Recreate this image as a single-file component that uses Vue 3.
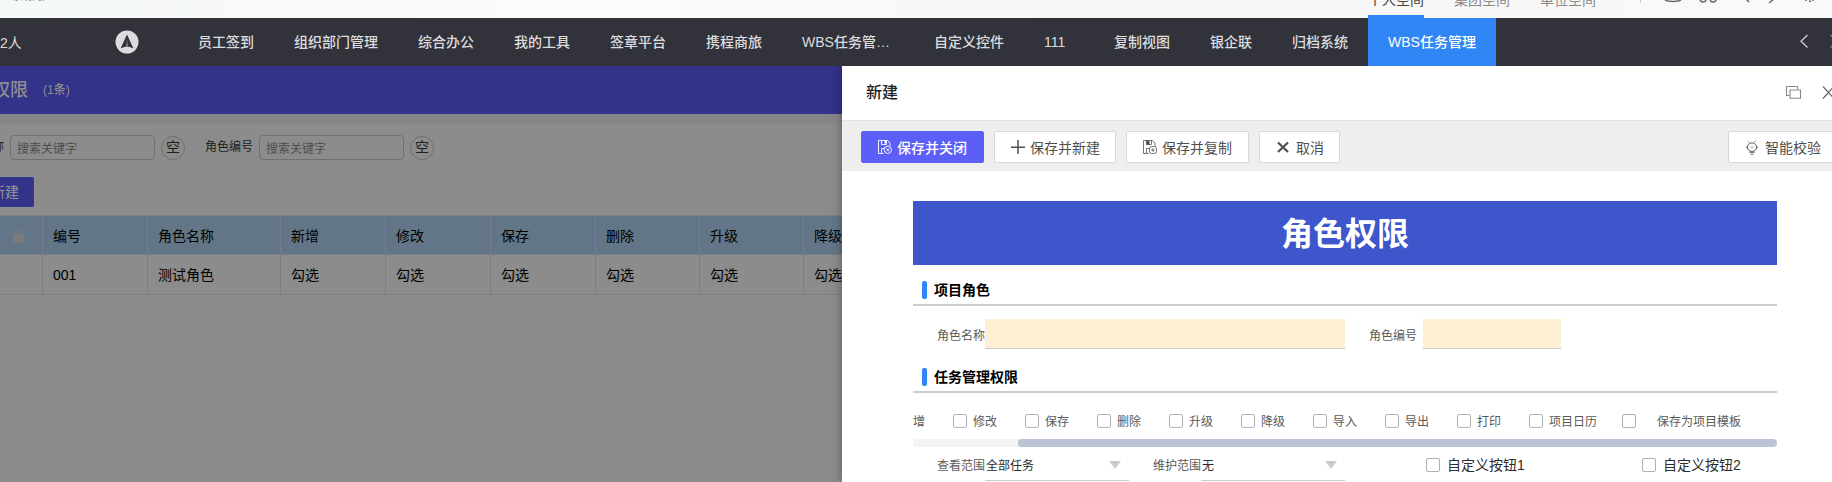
<script setup>
const nav = [
  { t: '员工签到', w: 56 }, { t: '组织部门管理', w: 84 }, { t: '综合办公', w: 56 },
  { t: '我的工具', w: 56 }, { t: '签章平台', w: 56 }, { t: '携程商旅', w: 56 },
  { t: 'WBS任务管…', w: 92 }, { t: '自定义控件', w: 70 }, { t: '111', w: 30 },
  { t: '复制视图', w: 56 }, { t: '银企联', w: 42 }, { t: '归档系统', w: 56 },
  { t: 'WBS任务管理', w: 88, on: true }
]
const cols = [
  ['编号', '001', 105], ['角色名称', '测试角色', 133], ['新增', '勾选', 105], ['修改', '勾选', 105],
  ['保存', '勾选', 105], ['删除', '勾选', 104], ['升级', '勾选', 104], ['降级', '勾选', 105]
]
const perms = ['修改', '保存', '删除', '升级', '降级', '导入', '导出', '打印', '项目日历']
</script>

<template>
  <div class="page">
    <header class="top">
      <span class="crumb">系统门户</span>
      <div class="spaces"><span class="cur">个人空间</span><span>集团空间</span><span>单位空间</span></div>
      <svg class="tools" width="192" height="18" viewBox="0 0 192 18" fill="none" stroke="#666" stroke-width="1.5">
        <path d="M.5 0V3" stroke="#ccc" stroke-width="1" />
        <path d="M25 0C28 2 38 2 41 0" />
        <path d="M60 -1a3 3 0 0 0 6 0M70 -1a3 3 0 0 0 6 0" />
        <path d="M105 -2l4 4M129 3l5 -4M165 0h2M169 1.200h2M172 0h2" />
      </svg>
    </header>
    <nav class="nav">
      <span class="people">2人</span>
      <svg class="logo" width="24" height="24" viewBox="0 0 24 24">
        <circle cx="12" cy="12" r="11.5" fill="#dcdcde" />
        <path d="M12 4.500L18.300 18.300L12 16.300L5.700 18.300Z" fill="#32323a" />
        <path d="M12 9.500L13.300 16.700H10.700Z" fill="#77777d" />
      </svg>
      <div class="menu">
        <div v-for="n in nav" :key="n.t" class="item" :class="{ on: n.on }">
          <span :style="{ width: n.w + 'px' }">{{ n.t }}</span>
        </div>
      </div>
      <svg class="arrows" width="34" height="16" viewBox="0 0 34 16" fill="none" stroke="#d0d0d3" stroke-width="1.3">
        <path d="M9.500 2L3 8.300L9.500 14.500" /><path d="M32.500 2L39 8.300L32.500 14.500" stroke="#888" />
      </svg>
    </nav>

    <main class="list">
      <div class="banner"><span class="name">权限</span><span class="count">(1条)</span></div>
      <div class="strip"></div>
      <div class="search">
        <span class="lab first">称</span><div class="inp">搜索关键字</div><span class="nul">空</span>
        <span class="lab">角色编号</span><div class="inp">搜索关键字</div><span class="nul">空</span>
      </div>
      <div class="act"><div class="new">新建</div></div>
      <div class="table">
        <div class="tr th">
          <div class="lock">
            <svg width="12" height="14" viewBox="0 0 12 14"><path d="M3 6V4a3 3 0 0 1 6 0V6" fill="none" stroke="#7b7a7c" stroke-width="1.4" /><rect x=".5" y="5.500" width="11" height="8" rx="1" fill="#7b7a7c" /></svg>
          </div>
          <div v-for="c in cols" :key="c[0]" class="td" :style="{ width: c[2] + 'px' }">{{ c[0] }}</div>
        </div>
        <div class="tr">
          <div class="lock"></div>
          <div v-for="c in cols" :key="c[0]" class="td" :style="{ width: c[2] + 'px' }">{{ c[1] }}</div>
        </div>
      </div>
    </main>

    <section class="drawer">
      <div class="head">
        <span>新建</span>
        <svg width="47" height="16" viewBox="0 0 47 16" fill="none" stroke="#888" stroke-width="1.100">
          <path d="M4.500 10.500H1.500V1.500H12.500V4.500" /><path d="M5 5H15.500V13.200H5Z" />
          <path d="M38 1.500L49 13.500M49 1.500L38 13.500" stroke="#666" stroke-width="1.200" />
        </svg>
      </div>
      <div class="bar">
        <div class="btn b1">
          <svg width="14" height="14" viewBox="0 0 14 14" fill="none" stroke="currentColor" stroke-width=".9">
            <path d="M5.500 13.500H.5V.5H9.500L12 3V6" /><path d="M3.500 .5V4.500H8.500V.5M3.500 13V8.500H6" /><path d="M6.500 1h1.500v2.500h-1.500z" fill="currentColor" stroke="none" />
            <circle cx="9.800" cy="9.800" r="3.700" /><path d="M8.300 8.300l3 3M11.300 8.300l-3 3" />
          </svg><span>保存并关闭</span>
        </div>
        <div class="btn b2">
          <svg width="14" height="14" viewBox="0 0 14 14" fill="none" stroke="currentColor" stroke-width="1.500"><path d="M0 7.200H14M7 0V14" /></svg><span>保存并新建</span>
        </div>
        <div class="btn b3">
          <svg width="14" height="14" viewBox="0 0 14 14" fill="none" stroke="currentColor" stroke-width=".8">
            <path d="M5.500 13.500H.5V.5H9.500L12 3V6" /><path d="M3.500 .5V4.500H8.500V.5M3.500 13V8.500H6" /><path d="M3.500 1h3v3.500h-3z" fill="currentColor" stroke="none" />
            <rect x="6.500" y="6.500" width="7" height="7" rx="2" /><path d="M10 8.200v3.600M8.200 10h3.600" />
          </svg><span>保存并复制</span>
        </div>
        <div class="btn b4">
          <svg width="12" height="12" viewBox="0 0 12 12" fill="none" stroke="currentColor" stroke-width="2.300"><path d="M1 1.500L11 11M11 1.500L1 11" /></svg><span>取消</span>
        </div>
        <div class="btn b5">
          <svg width="12" height="15" viewBox="0 0 12 15" fill="none" stroke="currentColor" stroke-width=".9">
            <ellipse cx="6" cy="7.200" rx="4.700" ry="4.300" /><path d="M0 7.200h1.500M10.500 7.200H12M3 2.500L2.500 1.500M8.500 2L9.500 .8M3.500 12.300h5M4.500 14.200h3" /><path d="M4 7.200h4" stroke-width=".4" />
          </svg><span>智能校验</span>
        </div>
      </div>
      <div class="form">
        <h1>角色权限</h1>
        <div class="sec"><i></i>项目角色</div>
        <div class="fields">
          <label>角色名称</label><div class="f f1"></div><label class="l2">角色编号</label><div class="f f2"></div>
        </div>
        <div class="sec s2"><i></i>任务管理权限</div>
        <div class="checks">
          <span class="clip">增</span>
          <span v-for="p in perms" :key="p" class="ck"><b></b>{{ p }}</span>
          <span class="ck tpl"><b></b>保存为项目模板</span>
        </div>
        <div class="scroll"><div class="thumb"></div></div>
        <div class="range">
          <label>查看范围</label><div class="sel"><span>全部任务</span><i></i></div>
          <label class="r2">维护范围</label><div class="sel"><span>无</span><i></i></div>
          <span class="big c1"><b></b>自定义按钮1</span>
          <span class="big c2"><b></b>自定义按钮2</span>
        </div>
      </div>
    </section>
  </div>
</template>

<style>
body { margin: 0; overflow: hidden; }
</style>
<style scoped>
* { box-sizing: border-box; }
.page { position: relative; width: 1832px; height: 482px; overflow: hidden; background: #8c8c8c; white-space: nowrap; font: 14px/20px "Liberation Sans", "Noto Sans CJK SC", sans-serif; color: #000; }
svg { flex: none; display: block; }
.top { height: 18px; background: linear-gradient(90deg, #f5f8f8, #fbfbfb 34%, #f6f6f6 60%, #f9f9f9); display: flex; overflow: hidden; color: #888; }
.crumb { width: 1368px; padding-left: 12px; font-size: 10px; line-height: 10px; margin-top: -8px; flex: none; }
.spaces { display: flex; width: 272px; gap: 30px; flex: none; }
.spaces span { width: 56px; height: 18px; line-height: 0; }
.spaces .cur { color: #444; border-bottom: 3px solid #3086f4; }
.nav { height: 48px; background: #32323a; display: flex; align-items: center; color: #dcdcde; font-weight: 500; }
.people { width: 115px; font-weight: 400; padding-top: 2px; }
.menu { display: flex; margin-left: 39px; flex: 1; align-self: stretch; }
.item { padding: 0 20px; display: flex; align-items: center; }
.item span { display: block; }
.item.on { background: #3086f4; color: #fff; }
.arrows { margin: 0 0 2px; }
.list { width: 842px; height: 416px; overflow: hidden; background: #8c8c8c; }
.banner { height: 48px; background: #323389; color: #8e8e8e; display: flex; align-items: center; font-weight: 500; }
.name { font-size: 18px; margin-left: -8px; width: 51px; padding-bottom: 1px; }
.count { font-size: 12px; }
.strip { height: 10px; background: #868686; }
.search { height: 53px; padding-top: 11px; display: flex; align-items: flex-start; font-size: 12px; color: #1c1c1c; }
.lab { width: 54px; margin-left: 20px; padding-top: 2px; }
.lab.first { width: 18px; margin-left: -8px; }
.inp { width: 145px; height: 25px; border: 1px solid #707070; border-radius: 4px; padding: 3px 6px 1px; color: #4c4c4c; }
.nul { width: 24px; height: 24px; margin: 1px 0 0 6px; border: 1px solid #707070; border-radius: 50%; line-height: 20px; text-indent: 4px; font-size: 14px; }
.act { height: 38px; }
.new { width: 34px; height: 30px; background: #323389; border: 1px solid #2a3f90; border-left: 0; border-radius: 0 2px 2px 0; color: #999; text-indent: -9px; line-height: 29px; overflow: hidden; }
.table { border-top: 1px solid #7d7e81; }
.tr { display: flex; height: 40px; border-bottom: 1px solid #7d7e81; line-height: 40px; width: 900px; }
.th { height: 39px; background: #637687; }
.tr:last-child { line-height: 41px; }
.lock { width: 42px; padding: 13px 0 0 13px; flex: none; }
.td { border-left: 1px solid #7d7e84; padding-left: 10px; flex: none; }
.drawer { position: absolute; left: 842px; top: 66px; width: 990px; height: 416px; background: #fff; box-shadow: 0 0 10px rgba(0, 0, 0, .35); clip-path: inset(0 0 0 -20px); }
.head { height: 54px; padding: 0 0 0 24px; display: flex; align-items: center; justify-content: space-between; font-size: 16px; font-weight: 500; color: #222; }
.bar { height: 51px; background: #eee; border-top: 1px solid #e2e2e2; padding: 10px 0 0 19px; display: flex; gap: 10px; }
.btn { height: 32px; flex: none; background: #fff; border: 1px solid #d8d8d8; border-radius: 2px; color: #4f4f4f; display: flex; align-items: center; padding-left: 16px; }
.btn svg { margin-right: 5px; }
.btn span { padding-top: 1px; }
.b1 { width: 123px; background: #5c5ef8; border-color: #5c5ef8; color: #fff; font-weight: 500; }
.b2 { width: 122px; }
.b3 { width: 123px; }
.b4 { width: 81px; padding-left: 17px; }
.b4 svg { margin-right: 7px; }
.b5 { width: 120px; margin-left: 378px; padding-left: 17px; }
.b5 svg { margin-right: 7px; }
.form { margin: 30px 0 0 71px; width: 864px; }
h1 { margin: 0; height: 64px; background: #3d56cb; color: #fff; text-align: center; font-size: 32px; line-height: 66px; font-weight: 700; }
.sec { height: 41px; border-bottom: 2px solid #ccc; padding: 11px 0 0 9px; display: flex; align-items: center; font-weight: 700; }
.sec i { width: 5px; height: 18px; border-radius: 2px; background: #3086f4; margin-right: 7px; }
.fields { display: flex; height: 43px; padding: 13px 0 0 24px; font-size: 12px; color: #5a5a5a; }
label { width: 48px; padding-top: 7px; flex: none; }
.l2 { margin-left: 24px; width: 54px; }
.f { height: 30px; background: #fef0d3; border-bottom: 1px solid #ccc; }
.f1 { width: 360px; }
.f2 { width: 138px; }
.s2 { height: 44px; padding-top: 14px; padding-bottom: 1px; }
.checks { height: 46px; padding-top: 19px; display: flex; font-size: 12px; color: #5a5a5a; }
.clip { width: 40px; }
.ck { width: 72px; display: flex; }
.ck:nth-last-child(2) { width: 93px; }
.ck b, .big b { width: 14px; height: 14px; border: 1px solid #b0b0b8; border-radius: 2px; margin: 2px 6px 0 0; flex: none; background: #fff; }
.tpl { width: 140px; }
.tpl b { margin-right: 21px; }
.scroll { height: 8px; border-radius: 4px; background: #f3f3f3; }
.thumb { margin-left: 105px; height: 8px; border-radius: 4px; background: #bcc3d5; }
.range { display: flex; padding-left: 24px; font-size: 12px; color: #5a5a5a; height: 36px; }
.range label { padding-top: 9px; }
.sel { width: 144px; height: 34px; flex: none; border-bottom: 1px solid #ccc; color: #2c2c2c; padding: 9px 8px 0 1px; display: flex; justify-content: space-between; }
.sel i { width: 0; height: 0; border: 6px solid transparent; border-top: 8px solid #ccc; border-bottom: 0; margin-top: 5px; }
.r2 { margin-left: 24px; }
.big { font-size: 14px; color: #2c2c2c; display: flex; padding-top: 8px; width: 216px; flex: none; }
.c1 { margin-left: 81px; }
.big b { margin: 3px 7px 0 0; }
</style>
